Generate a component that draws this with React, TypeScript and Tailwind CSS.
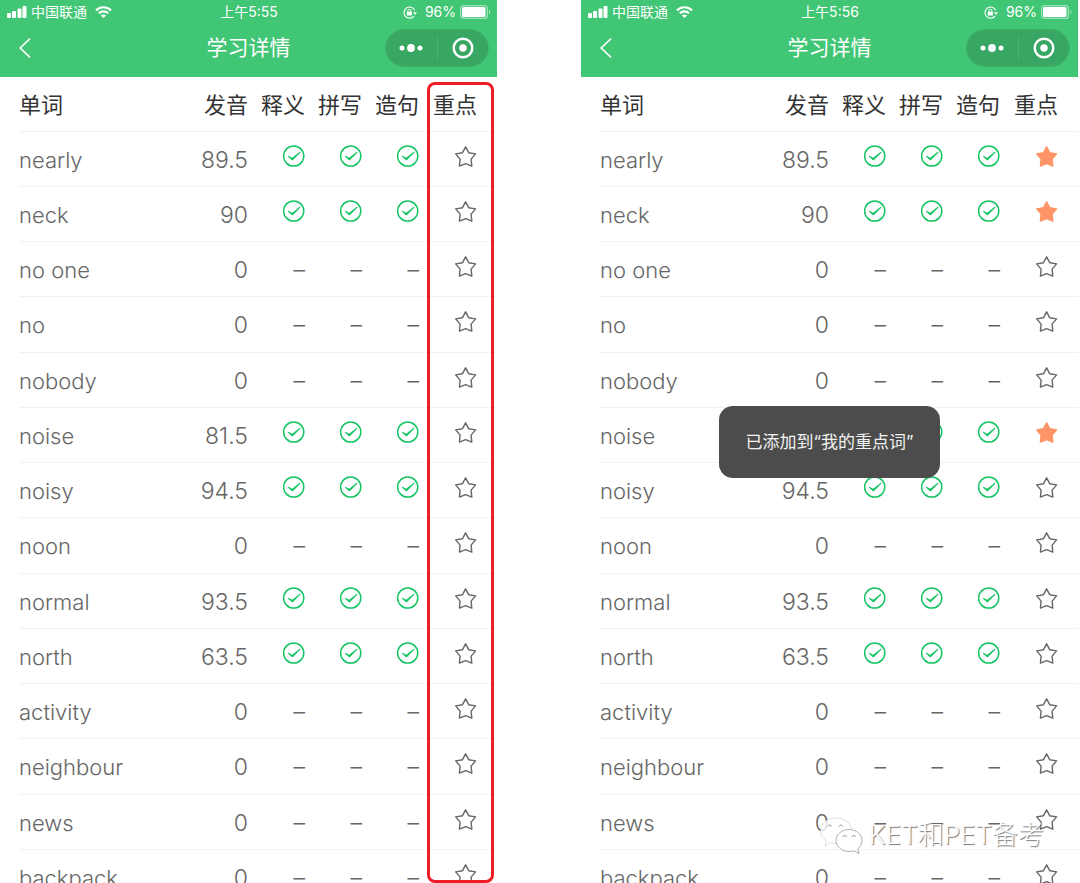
import { useState } from "react";
import clsx from "clsx";

interface Word {
  text: string;
  score: string;
  passed: boolean;
}

const WORDS: Word[] = [
  { text: "nearly", score: "89.5", passed: true },
  { text: "neck", score: "90", passed: true },
  { text: "no one", score: "0", passed: false },
  { text: "no", score: "0", passed: false },
  { text: "nobody", score: "0", passed: false },
  { text: "noise", score: "81.5", passed: true },
  { text: "noisy", score: "94.5", passed: true },
  { text: "noon", score: "0", passed: false },
  { text: "normal", score: "93.5", passed: true },
  { text: "north", score: "63.5", passed: true },
  { text: "activity", score: "0", passed: false },
  { text: "neighbour", score: "0", passed: false },
  { text: "news", score: "0", passed: false },
  { text: "backpack", score: "0", passed: false },
];

const SKILLS = ["释义", "拼写", "造句"];

function SignalIcon() {
  return (
    <svg className="h-3 w-5" viewBox="0 0 20 12" fill="currentColor">
      <rect x="0" y="7" width="4" height="5" rx="1" />
      <rect x="5" y="5" width="4" height="7" rx="1" />
      <rect x="10.5" y="2.5" width="4" height="9.5" rx="1" />
      <rect x="15.5" y="0" width="4" height="12" rx="1" />
    </svg>
  );
}

function WifiIcon() {
  return (
    <svg className="h-3 w-[17px]" viewBox="0 0 17 12" fill="none" stroke="currentColor" strokeWidth="2.2">
      <path d="M1 4.4C5.2 0.2 11.8 0.2 16 4.4" />
      <path d="M3.8 7.3c2.7-2.6 6.7-2.6 9.4 0" />
      <path d="M8.5 12L5.9 9.4c1.5-1.3 3.7-1.3 5.2 0z" fill="currentColor" stroke="none" />
    </svg>
  );
}

function RotationLockIcon() {
  return (
    <svg className="h-[13px] w-[14px]" viewBox="0 0 14 13" fill="none" stroke="currentColor">
      <path d="M11.7 4.2A5.6 5.6 0 1 0 11 10.1" strokeWidth="1.1" />
      <path d="M10 6.2h4l-2 2.8z" fill="currentColor" stroke="none" />
      <rect x="3.9" y="5.8" width="5" height="3.8" rx="0.5" fill="currentColor" stroke="none" />
      <path d="M4.9 6V4.8a1.5 1.5 0 0 1 3 0V6" strokeWidth="1" />
    </svg>
  );
}

function BatteryIcon() {
  return (
    <svg className="h-[14px] w-[31px]" viewBox="0 0 31 14">
      <rect x="0.6" y="0.6" width="26.8" height="12.8" rx="3" fill="none" stroke="#fff" strokeOpacity="0.5" strokeWidth="1.2" />
      <rect x="2" y="2" width="23.5" height="10" rx="1.6" fill="#fff" />
      <path d="M29 4.8c1.8 0.8 1.8 3.6 0 4.4z" fill="#fff" fillOpacity="0.5" />
    </svg>
  );
}

function CheckIcon() {
  return (
    <svg className="ml-auto block size-[22px]" viewBox="0 0 22 22" role="img" aria-label="通过">
      <circle cx="10.7" cy="11" r="10.1" fill="none" stroke="#16c464" strokeWidth="1.5" />
      <path
        d="M5.6 11.4L9.3 13.5L16.8 7.4L9.4 14.7z"
        fill="#16c464"
        stroke="#16c464"
        strokeWidth="1.2"
        strokeLinejoin="round"
      />
    </svg>
  );
}

function StarIcon({ filled }: { filled: boolean }) {
  return (
    <svg
      className={clsx("block size-[22px]", filled ? "text-[#ff9567]" : "text-[#666]")}
      viewBox="0 0 22 22"
      fill={filled ? "currentColor" : "none"}
      stroke="currentColor"
      strokeWidth="1.4"
      strokeLinejoin="round"
    >
      <path d="M10.6 0.8L13.7 6.7L20.6 7.9L16.1 13.1L16.8 20.1L10.6 17.6L4.4 20.1L5.1 13.1L0.7 7.9L7.5 6.7z" />
    </svg>
  );
}

function PhoneHeader({ time }: { time: string }) {
  return (
    <header className="h-[77px] bg-[#41c675] font-normal text-white">
      <div className="grid h-6 grid-cols-[1fr_auto_1fr] items-center pr-1.5 pl-[7px] text-[14px] leading-6">
        <div className="flex items-center gap-1">
          <SignalIcon />
          <span>中国联通</span>
          <span className="pl-1">
            <WifiIcon />
          </span>
        </div>
        <span>{time}</span>
        <div className="flex items-center justify-end">
          <RotationLockIcon />
          <span className="pr-1 pl-2">96%</span>
          <BatteryIcon />
        </div>
      </div>
      <div className="grid grid-cols-[1fr_auto_1fr] items-center px-2 pt-[5px]">
        <button type="button" aria-label="返回" className="w-9 pl-[10px]">
          <svg className="h-5 w-[14px]" viewBox="0 0 14 20" fill="none" stroke="currentColor" strokeWidth="1.6">
            <path d="M12 0.6L2.2 10L12 19.4" />
          </svg>
        </button>
        <h1 className="text-[21px] leading-[38px]">学习详情</h1>
        <div className="flex h-[38px] w-[104px] items-center justify-self-end rounded-full border border-[#3fb36c] bg-[#37a763]">
          <button type="button" aria-label="更多" className="flex flex-1 justify-center">
            <svg className="h-2 w-6" viewBox="0 0 24 8" fill="currentColor">
              <circle cx="3" cy="4" r="2.5" />
              <circle cx="12" cy="4" r="3.9" />
              <circle cx="21" cy="4" r="2.5" />
            </svg>
          </button>
          <span className="h-[22px] w-px bg-[#4fb577]" />
          <button type="button" aria-label="关闭" className="flex flex-1 justify-center">
            <svg className="size-[22px]" viewBox="0 0 22 22">
              <circle cx="11" cy="11" r="9.3" fill="none" stroke="currentColor" strokeWidth="2.4" />
              <circle cx="11" cy="11" r="3.7" fill="currentColor" />
            </svg>
          </button>
        </div>
      </div>
    </header>
  );
}

interface PhoneProps {
  time: string;
  initialStarred: string[];
  highlightColumn?: boolean;
  toast?: string;
}

function Phone({ time, initialStarred, highlightColumn, toast }: PhoneProps) {
  const [starred, setStarred] = useState(initialStarred);

  function toggleStar(word: string) {
    setStarred((prev) => (prev.includes(word) ? prev.filter((w) => w !== word) : [...prev, word]));
  }

  return (
    <section className="relative h-full min-w-0 flex-1 overflow-hidden">
      <PhoneHeader time={time} />

      <div className="pl-[19px]">
        <table className="h-[828px] w-full table-fixed text-[22px] leading-8 text-[#666]">
          <thead>
            <tr className="h-[54px] border-b border-[#f2f2f2] text-[#333]">
              <th className="pt-0.5 text-left font-normal">单词</th>
              <th className="w-[70px] pt-0.5 text-right font-normal">发音</th>
              {SKILLS.map((skill) => (
                <th key={skill} className="w-[57px] pt-0.5 text-right font-normal">
                  {skill}
                </th>
              ))}
              <th className="w-[78px] pt-0.5 pr-5 text-right font-normal">重点</th>
            </tr>
          </thead>
          <tbody>
            {WORDS.map((word) => (
              <tr key={word.text} className="h-[55px] border-b border-[#f2f2f2]">
                <td className="pt-0.5 whitespace-nowrap">{word.text}</td>
                <td className="pt-0.5 text-right text-[23px]">{word.score}</td>
                {SKILLS.map((skill) => (
                  <td key={skill} className={clsx("text-right text-[23px]", word.passed ? "pb-1.5" : "pt-0.5")}>
                    {word.passed ? <CheckIcon /> : "–"}
                  </td>
                ))}
                <td className="pr-5 pb-1">
                  <button
                    type="button"
                    aria-label="重点"
                    aria-pressed={starred.includes(word.text)}
                    onClick={() => toggleStar(word.text)}
                    className="ml-auto block"
                  >
                    <StarIcon filled={starred.includes(word.text)} />
                  </button>
                </td>
              </tr>
            ))}
          </tbody>
        </table>
      </div>

      {/* Red frame round the star column */}
      {highlightColumn && (
        <div className="pointer-events-none absolute top-[82px] right-[3px] bottom-0 w-[67px] rounded-lg border-3 border-[#ee1c25]" />
      )}

      {toast && (
        <div className="pointer-events-none absolute inset-0 flex items-center justify-center">
          <div role="status" className="rounded-[14px] bg-[#4c4c4c] px-[27px] py-6 text-[17px] leading-6 font-normal text-[#f2f2f2]">
            {toast}
          </div>
        </div>
      )}
    </section>
  );
}

function Watermark() {
  return (
    <div className="pointer-events-none absolute right-9 bottom-7 flex items-center gap-1 text-[26px] leading-10 font-light text-white">
      <svg className="h-10 w-[46px]" viewBox="0 0 46 40" fill="#fff" stroke="#999" strokeWidth="0.8">
        <path
          d="M17 3C8 3 1.5 8.6 1.5 15.8c0 4.2 2.3 7.8 5.9 10.1L6 31l5.8-3.2c1.7 0.4 3.4 0.7 5.2 0.7 9 0 15.6-5.6 15.6-12.7S26 3 17 3z"
          fillOpacity="0.8"
          strokeOpacity="0.4"
        />
        <path d="M30 14.5c-7.3 0-13 4.9-13 11s5.7 11 13 11c1.6 0 3.2-0.2 4.7-0.7L40 38.5l-1.3-4.4c2.7-2 4.3-5.1 4.3-8.6 0-6.1-5.7-11-13-11z" />
        <path
          d="M9 11.5c0.5-2 3-2 3.5 0M20 11.5c0.5-2 3-2 3.5 0M24 22c0.5-2 3-2 3.5 0M33 22c0.5-2 3-2 3.5 0"
          fill="none"
          stroke="#777"
        />
      </svg>
      <span className="[text-shadow:1px_1px_1px_#777]">KET和PET备考</span>
    </div>
  );
}

export default function App() {
  return (
    <main className="relative flex h-screen gap-[84px] overflow-hidden bg-white pr-0.5 font-['Inter','Noto_Sans_CJK_SC',sans-serif] font-light">
      <Phone time="上午5:55" initialStarred={[]} highlightColumn />
      <Phone time="上午5:56" initialStarred={["nearly", "neck", "noise"]} toast="已添加到“我的重点词”" />
      <Watermark />
    </main>
  );
}
